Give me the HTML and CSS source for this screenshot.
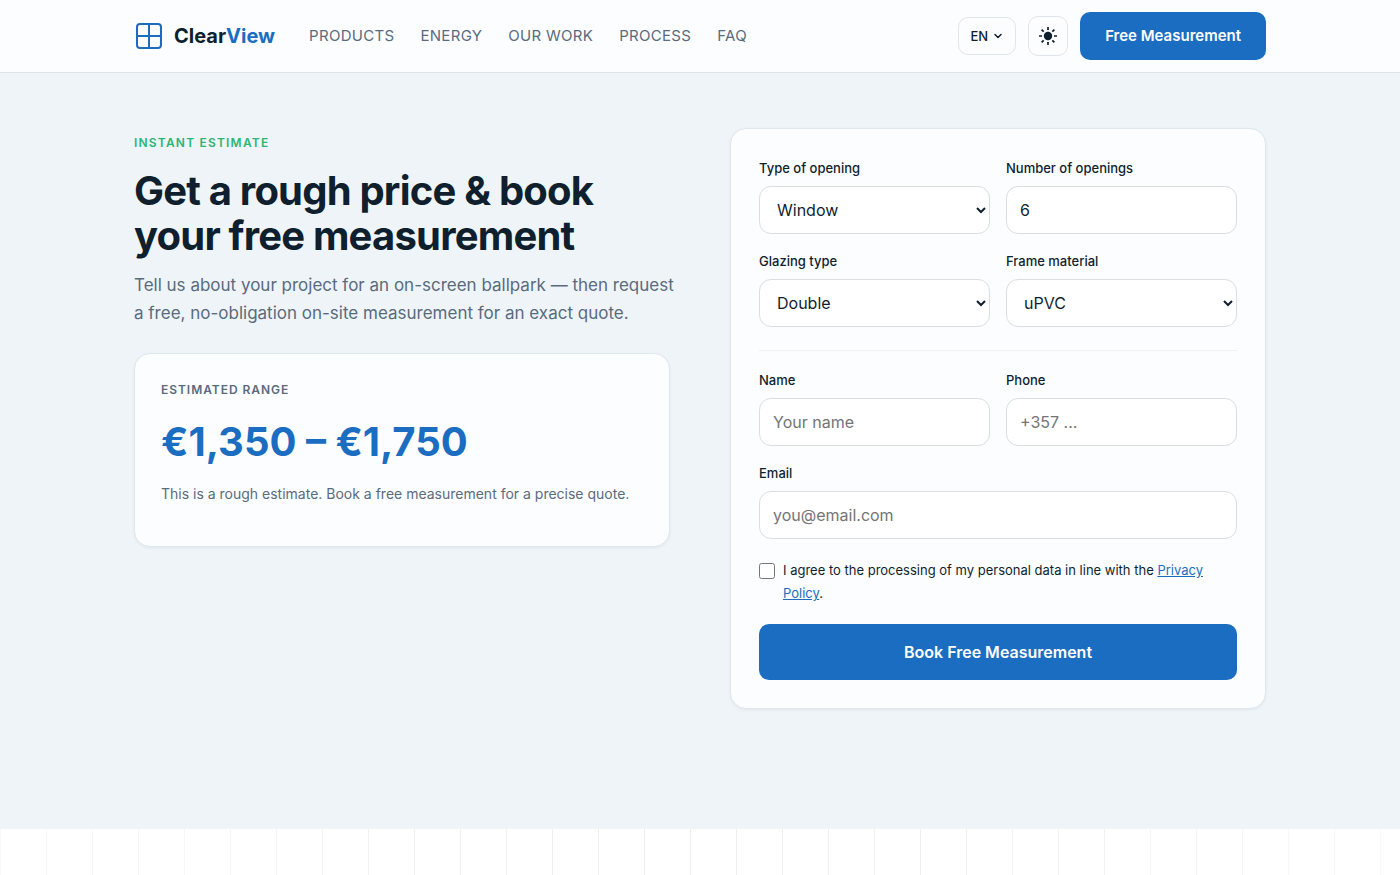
FILE: index.html
```html
<!DOCTYPE html>
<html lang="en">
<head>
  <meta charset="UTF-8" />
  <meta name="viewport" content="width=device-width, initial-scale=1.0" />
  <title>ClearView</title>
  <link rel="stylesheet" href="styles.css">
</head>
<body>
  <header class="header">
    <div class="container header-inner">
      <a class="logo" href="#">
        <svg class="logo-mark" viewBox="0 0 30 30" fill="none" stroke="currentColor" stroke-width="2">
          <rect x="3" y="3" width="24" height="24" rx="3" />
          <path d="M15 3v24M3 15h24" />
        </svg>
        <span>Clear<span class="logo-accent">View</span></span>
      </a>
      <nav class="nav">
        <a href="#products">Products</a>
        <a href="#energy">Energy</a>
        <a href="#work">Our work</a>
        <a href="#process">Process</a>
        <a href="#faq">FAQ</a>
      </nav>
      <div class="header-actions">
        <button class="lang-btn" type="button">
          EN
          <svg viewBox="0 0 12 12" width="12" height="12" fill="none" stroke="currentColor" stroke-width="1.5" stroke-linecap="round" stroke-linejoin="round"><path d="M3 4.5l3 3 3-3" /></svg>
        </button>
        <button class="theme-btn" type="button" aria-label="Theme">
          <svg viewBox="0 0 20 20" width="20" height="20" stroke="currentColor" stroke-width="1.7">
            <circle cx="10" cy="10" r="4.2" fill="currentColor" stroke="none" />
            <path d="M10 1v3M10 16v3M1 10h3M16 10h3M3.6 3.6l2.1 2.1M14.3 14.3l2.1 2.1M3.6 16.4l2.1-2.1M14.3 5.7l2.1-2.1" />
          </svg>
        </button>
        <a class="btn btn-small" href="#estimate">Free Measurement</a>
      </div>
    </div>
  </header>

  <main>
    <section class="estimate" id="estimate">
      <div class="container estimate-grid">
        <div class="intro">
          <p class="eyebrow">Instant estimate</p>
          <h2>Get a rough price &amp; book your free measurement</h2>
          <p class="lead">Tell us about your project for an on-screen ballpark — then request a free, no-obligation on-site measurement for an exact quote.</p>
          <div class="card range-card">
            <p class="range-label">Estimated range</p>
            <p class="range-price">€1,350 – €1,750</p>
            <p class="range-note">This is a rough estimate. Book a free measurement for a precise quote.</p>
          </div>
        </div>

        <form class="card form">
          <div class="row">
            <div class="field">
              <label for="opening">Type of opening</label>
              <select id="opening"><option>Window</option><option>Door</option></select>
            </div>
            <div class="field">
              <label for="count">Number of openings</label>
              <input id="count" type="number" min="1" value="6">
            </div>
            <div class="field">
              <label for="glazing">Glazing type</label>
              <select id="glazing"><option>Double</option><option>Triple</option></select>
            </div>
            <div class="field">
              <label for="frame">Frame material</label>
              <select id="frame"><option>uPVC</option><option>Aluminium</option></select>
            </div>
          </div>
          <hr class="divider">
          <div class="row">
            <div class="field">
              <label for="name">Name</label>
              <input id="name" type="text" placeholder="Your name">
            </div>
            <div class="field">
              <label for="phone">Phone</label>
              <input id="phone" type="tel" placeholder="+357 ...">
            </div>
            <div class="field field-wide">
              <label for="email">Email</label>
              <input id="email" type="email" placeholder="you@email.com">
            </div>
          </div>
          <div class="consent">
            <input id="consent" type="checkbox">
            <label for="consent">I agree to the processing of my personal data in line with the <a href="#privacy">Privacy Policy</a>.</label>
          </div>
          <button class="btn btn-block" type="submit">Book Free Measurement</button>
        </form>
      </div>
    </section>
    <section class="panes"></section>
  </main>
</body>
</html>
```
FILE: styles.css
```css
* {
  box-sizing: border-box;
}
body {
  display: flex;
  flex-direction: column;
  min-height: 100vh;
  margin: 0;
  font-family: Inter, "Liberation Sans", sans-serif;
  font-size: 16px;
  line-height: 28px;
  color: #0f1f2e;
  background: #fff;
}
main {
  display: flex;
  flex: 1;
  flex-direction: column;
}
h2, p {
  margin: 0;
}
.container {
  width: 100%;
  max-width: 1180px;
  margin: 0 auto;
  padding: 0 24px;
}

/* header */
.header {
  background: #fcfdff;
  border-bottom: 1px solid #dde5ec;
}
.header-inner {
  display: flex;
  align-items: center;
  gap: 34px;
  height: 72px;
}
.logo {
  display: flex;
  align-items: center;
  gap: 10px;
  color: #0f1f2e;
  font-size: 20px;
  font-weight: 700;
  text-decoration: none;
}
.logo-mark {
  width: 30px;
  height: 30px;
  color: #1a6dc0;
}
.logo-accent {
  color: #1a6dc0;
}
.nav {
  display: flex;
  gap: 26px;
}
.nav a {
  color: #5a6b7d;
  font-size: 15px;
  font-weight: 400;
  letter-spacing: 0.02em;
  text-transform: uppercase;
  text-decoration: none;
}
.header-actions {
  display: flex;
  align-items: center;
  gap: 12px;
  margin-left: auto;
}
.lang-btn, .theme-btn {
  display: flex;
  align-items: center;
  justify-content: center;
  color: #0f1f2e;
  background: #fcfdff;
  border: 1px solid #dfe6ee;
  border-radius: 10px;
  cursor: pointer;
}
.lang-btn {
  gap: 4px;
  height: 38px;
  padding: 0 11px;
  font: 500 13px Inter, sans-serif;
}
.theme-btn {
  width: 40px;
  height: 40px;
  padding: 0;
}
.btn {
  display: flex;
  align-items: center;
  justify-content: center;
  color: #fff;
  background: #1a6dc0;
  border: none;
  border-radius: 10px;
  font-family: inherit;
  font-weight: 600;
  text-decoration: none;
  cursor: pointer;
}
.btn-small {
  height: 48px;
  padding: 0 25px;
  font-size: 15px;
}
.btn-block {
  width: 100%;
  height: 56px;
  font-size: 16px;
}

/* estimate */
.estimate {
  padding: 55px 0 120px;
  background: #eef4f8;
}
.estimate-grid {
  display: grid;
  grid-template-columns: 1fr 1fr;
  align-items: start;
  gap: 60px;
}
.intro {
  padding-top: 1px;
}
.eyebrow {
  margin-bottom: 11px;
  color: #2bb673;
  font-size: 12px;
  font-weight: 600;
  letter-spacing: 0.1em;
  text-transform: uppercase;
}
h2 {
  margin-bottom: 13px;
  font-size: 40px;
  font-weight: 700;
  line-height: 45px;
  letter-spacing: -0.02em;
}
.lead {
  margin-right: -10px;
  color: #5a6b7d;
  font-size: 17px;
}
.card {
  background: #fcfdff;
  border: 1px solid #dfe7ee;
  border-radius: 16px;
  box-shadow: 0 1px 3px rgba(15, 31, 46, 0.06);
}
.range-card {
  margin-top: 26px;
  padding: 22px 26px 38px;
}
.range-label {
  color: #5a6b7d;
  font-size: 12px;
  font-weight: 600;
  letter-spacing: 0.08em;
  text-transform: uppercase;
}
.range-price {
  margin: 8px 0;
  color: #1a6dc0;
  font-size: 40px;
  font-weight: 700;
  line-height: 60px;
}
.range-note {
  color: #5a6b7d;
  font-size: 14px;
}

/* form */
.form {
  padding: 28px;
}
.row {
  display: grid;
  grid-template-columns: 1fr 1fr;
  gap: 16px;
}
.field {
  display: flex;
  flex-direction: column;
  gap: 6px;
}
.field-wide {
  grid-column: 1 / -1;
}
.field label {
  font-size: 13px;
  font-weight: 500;
  line-height: 23px;
}
.field input, .field select {
  width: 100%;
  height: 48px;
  padding: 0 13px;
  color: #0f1f2e;
  background: #fff;
  border: 1px solid #d9dee2;
  border-radius: 12px;
  font: 16px Inter, sans-serif;
}
.field input::placeholder {
  color: #757575;
}
.divider {
  margin: 23px 0 18px;
  border: none;
  border-top: 1px solid #eef2f6;
}
.consent {
  display: flex;
  align-items: flex-start;
  gap: 8px;
  margin: 20px 0 19px;
  font-size: 13px;
  line-height: 23px;
}
.consent input {
  flex: none;
  width: 16px;
  height: 16px;
  margin: 4px 0 0;
}
.consent a {
  color: #1a6dc0;
}

/* vertical lines fading out at both sides */
.panes {
  flex: 1;
  min-height: 46px;
  background: repeating-linear-gradient(90deg, #eaeef1 0 1px, transparent 1px 46px);
  -webkit-mask-image: linear-gradient(90deg, rgba(0, 0, 0, 0.4), #000 50%, rgba(0, 0, 0, 0.4));
  mask-image: linear-gradient(90deg, rgba(0, 0, 0, 0.4), #000 50%, rgba(0, 0, 0, 0.4));
}
```
